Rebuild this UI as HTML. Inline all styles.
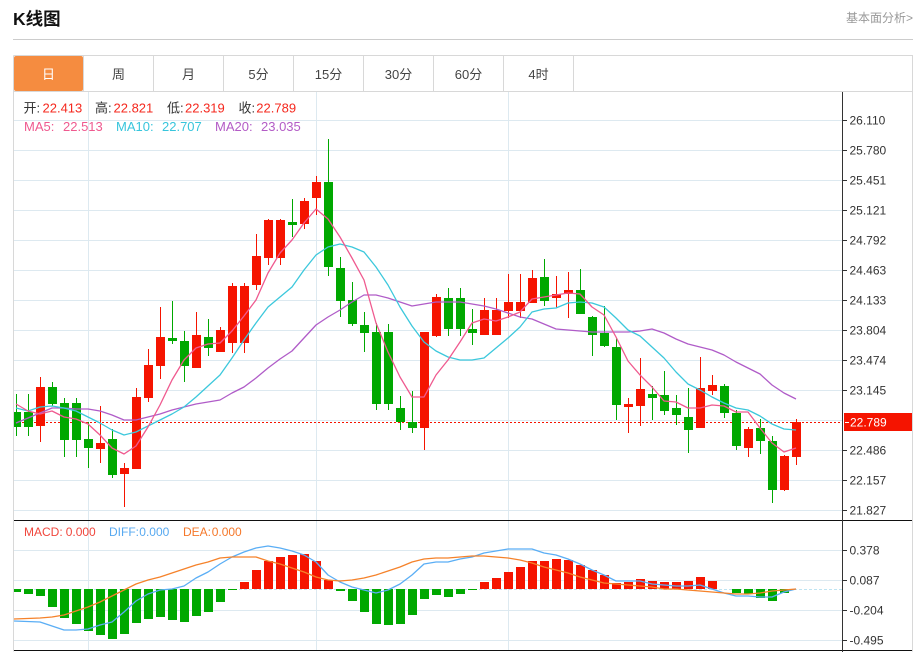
<!DOCTYPE html>
<html lang="zh"><head><meta charset="utf-8"><title>K线图</title>
<style>
html,body{margin:0;padding:0;background:#fff;width:921px;height:652px;overflow:hidden}
svg{display:block;font-family:"Liberation Sans","Noto Sans CJK SC",sans-serif}
.c{shape-rendering:crispEdges}
.l{fill:none;stroke-width:1.3;stroke-linejoin:round}
</style></head><body>
<svg width="921" height="652" viewBox="0 0 921 652" xmlns="http://www.w3.org/2000/svg">
<text x="13" y="25" font-size="17.5" font-weight="bold" fill="#111">K线图</text>
<text x="913" y="22" font-size="12" fill="#999" text-anchor="end">基本面分析&gt;</text>
<path class="c" d="M13 39.5H913" stroke="#ccc" fill="none"/>

<!-- tabs -->
<g class="c" fill="none" stroke="#d8d8d8">
<path d="M13.5 55.5H912.5V651.5M13.5 55.5V651.5M13 91.5H913"/>
<path d="M83.5 56V91M153.5 56V91M223.5 56V91M293.5 56V91M363.5 56V91M433.5 56V91M503.5 56V91M573.5 56V91"/>
</g>
<rect x="14" y="56" width="69" height="35" rx="2" fill="#f58c40"/>
<g font-size="13" fill="#444" text-anchor="middle">
<text x="48.500" y="79" fill="#fff">日</text>
<text x="118.500" y="79">周</text>
<text x="188.500" y="79">月</text>
<text x="258.500" y="79">5分</text>
<text x="328.500" y="79">15分</text>
<text x="398.500" y="79">30分</text>
<text x="468.500" y="79">60分</text>
<text x="538.500" y="79">4时</text>
</g>

<!-- grid -->
<g class="c" fill="none" stroke="#dde9f0">
<path d="M14 120.500H842M14 150.500H842M14 180.500H842M14 210.500H842M14 240.500H842M14 270.500H842M14 300.500H842M14 330.500H842M14 360.500H842M14 390.500H842M14 420.500H842M14 450.500H842M14 480.500H842M14 510.500H842"/>
<path d="M14 550.500H842M14 580.500H842M14 610.500H842M14 640.500H842"/>
<path d="M88.500 92V650M316.500 92V650M508.500 92V650"/>
</g>
<path class="c" d="M14 589.500H842" stroke="#bfe4f2" stroke-dasharray="3 2" fill="none"/>
<path class="c" d="M14 422.500H842" stroke="#f51400" stroke-dasharray="2 2" fill="none"/>

<!-- candles green -->
<path class="c" stroke="#00a800" fill="none" d="M16.500 394V436M28.500 394V436M52.500 382V406M64.500 398V457M76.500 398V457M88.500 422V468M112.500 429V478M172.500 301V344M184.500 331V382M208.500 319V356M292.500 199V237M328.500 139V276M340.500 257V317M352.500 282V326M364.500 312V352M376.500 323V410M388.500 324V410M400.500 396V430M412.500 391V433M448.500 288V336M460.500 288V336M472.500 309V345M544.500 259V306M580.500 269V314M592.500 316V356M604.500 306V347M616.500 338V420M652.500 386V420M664.500 371V415M676.500 395V425M688.500 388V453M724.500 384V418M736.500 410V450M760.500 419V454M772.500 436V503"/>
<path class="c" fill="#00a800" d="M14 412h7V427h-7zM24 412h9V427h-9zM48 387h9V404h-9zM60 403h9V440h-9zM72 403h9V440h-9zM84 439h9V448h-9zM108 439h9V475h-9zM168 338h9V341h-9zM180 341h9V366h-9zM204 337h9V348h-9zM288 222h9V225h-9zM324 182h9V267h-9zM336 268h9V301h-9zM348 300h9V324h-9zM360 325h9V333h-9zM372 332h9V404h-9zM384 332h9V404h-9zM396 408h9V422h-9zM408 422h9V428h-9zM444 298h9V329h-9zM456 298h9V329h-9zM468 329h9V333h-9zM540 277h9V301h-9zM576 290h9V314h-9zM588 317h9V335h-9zM600 333h9V346h-9zM612 347h9V405h-9zM648 394h9V398h-9zM660 395h9V411h-9zM672 408h9V415h-9zM684 417h9V430h-9zM720 386h9V413h-9zM732 413h9V446h-9zM756 428h9V441h-9zM768 441h9V490h-9z"/>
<!-- candles red -->
<path class="c" stroke="#f51400" fill="none" d="M40.500 377V442M100.500 406V463M124.500 463V507M136.500 388V469M148.500 349V402M160.500 307V379M196.500 312V368M220.500 327V352M232.500 283V353M244.500 283V353M256.500 234V290M268.500 219V265M280.500 219V265M304.500 198V229M316.500 176V215M424.500 332V450M436.500 294V337M484.500 298V335M496.500 298V335M508.500 274V318M520.500 274V318M532.500 270V303M556.500 276V308M568.500 272V318M628.500 398V433M640.500 358V426M700.500 357V428M712.500 375V395M748.500 427V457M784.500 455V491M796.500 419V465"/>
<path class="c" fill="#f51400" d="M36 387h9V426h-9zM96 443h9V449h-9zM120 468h9V474h-9zM132 397h9V469h-9zM144 365h9V398h-9zM156 337h9V366h-9zM192 335h9V368h-9zM216 330h9V352h-9zM228 286h9V343h-9zM240 286h9V343h-9zM252 256h9V285h-9zM264 220h9V258h-9zM276 220h9V258h-9zM300 201h9V224h-9zM312 182h9V198h-9zM420 332h9V428h-9zM432 297h9V336h-9zM480 310h9V335h-9zM492 310h9V335h-9zM504 302h9V311h-9zM516 302h9V311h-9zM528 278h9V303h-9zM552 294h9V298h-9zM564 290h9V294h-9zM624 404h9V407h-9zM636 389h9V406h-9zM696 388h9V428h-9zM708 385h9V391h-9zM744 429h9V448h-9zM780 456h9V490h-9zM792 422h9V457h-9z"/>

<!-- MA lines -->
<polyline class="l" stroke="#b05cc8" points="16,423 28,418 40,413 52,408 64,408 76,409 88,409 100,411 112,415 124,420 136,420 148,417 160,414 172,410 184,407 196,404 208,402 220,400 232,393 244,387 256,378 268,368 280,359 292,351 304,338 316,325 328,317 340,310 352,302 364,295 376,295 388,298 400,302 412,306 424,304 436,302 448,302 460,302 472,304 484,306 496,309 508,313 520,317 532,319 544,324 556,329 568,330 580,331 592,332 604,332 616,332 628,332 640,331 652,329 664,333 676,339 688,344 700,347 712,350 724,355 736,362 748,368 760,374 772,385 784,393 796,399"/>
<polyline class="l" stroke="#3cc8dc" points="16,408 28,411 40,407 52,406 64,408 76,411 88,417 100,423 112,430 124,435 136,432 148,426 160,420 172,414 184,407 196,397 208,386 220,375 232,358 244,340 256,323 268,307 280,297 292,287 304,270 316,255 328,247 340,244 352,247 364,252 376,267 388,285 400,307 412,326 424,342 436,351 448,357 460,360 472,360 484,358 496,348 508,338 520,327 532,312 544,309 556,308 568,303 580,302 592,303 604,307 616,318 628,330 640,336 652,347 664,358 676,372 688,384 700,390 712,397 724,403 736,408 748,410 760,416 772,424 784,429 796,430"/>
<polyline class="l" stroke="#ef5a8f" points="16,404 28,411 40,414 52,411 64,417 76,419 88,424 100,435 112,448 124,454 136,446 148,427 160,405 172,380 184,360 196,348 208,344 220,343 232,331 244,316 256,300 268,273 280,253 292,240 304,223 316,209 328,219 340,237 352,258 364,280 376,323 388,352 400,377 412,397 424,397 436,375 448,360 460,342 472,323 484,319 496,321 508,317 520,312 532,299 544,297 556,295 568,293 580,294 592,307 604,315 616,337 628,361 640,375 652,387 664,401 676,402 688,408 700,408 712,405 724,406 736,412 748,412 760,428 772,443 784,452 796,448"/>

<!-- MACD bars -->
<path class="c" fill="#00a800" d="M14 589h7V592h-7zM24 589h9V594h-9zM36 589h9V596h-9zM48 589h9V607h-9zM60 589h9V618h-9zM72 589h9V624h-9zM84 589h9V631h-9zM96 589h9V635h-9zM108 589h9V639h-9zM120 589h9V634h-9zM132 589h9V623h-9zM144 589h9V619h-9zM156 589h9V617h-9zM168 589h9V620h-9zM180 589h9V622h-9zM192 589h9V616h-9zM204 589h9V612h-9zM216 589h9V602h-9zM228 589h9V590h-9zM336 589h9V591h-9zM348 589h9V601h-9zM360 589h9V612h-9zM372 589h9V624h-9zM384 589h9V625h-9zM396 589h9V624h-9zM408 589h9V615h-9zM420 589h9V599h-9zM432 589h9V595h-9zM444 589h9V597h-9zM456 589h9V594h-9zM468 589h9V590h-9zM732 589h9V593h-9zM744 589h9V594h-9zM756 589h9V598h-9zM768 589h9V601h-9zM780 589h9V593h-9z"/>
<path class="c" fill="#f51400" d="M240 582h9V589h-9zM252 570h9V589h-9zM264 561h9V589h-9zM276 557h9V589h-9zM288 555h9V589h-9zM300 554h9V589h-9zM312 561h9V589h-9zM324 580h9V589h-9zM480 582h9V589h-9zM492 578h9V589h-9zM504 572h9V589h-9zM516 567h9V589h-9zM528 561h9V589h-9zM540 561h9V589h-9zM552 559h9V589h-9zM564 560h9V589h-9zM576 565h9V589h-9zM588 570h9V589h-9zM600 575h9V589h-9zM612 583h9V589h-9zM624 582h9V589h-9zM636 579h9V589h-9zM648 581h9V589h-9zM660 582h9V589h-9zM672 582h9V589h-9zM684 581h9V589h-9zM696 577h9V589h-9zM708 581h9V589h-9z"/>
<polyline class="l" stroke="#5aaef5" points="14,621 40,622 52,626 64,630 76,630 88,629 100,625 112,622 124,612 136,601 148,594 160,590 172,589 184,586 196,578 208,572 220,564 232,557 244,552 256,548 268,546 280,548 292,551 304,555 316,562 328,575 340,582 352,587 364,590 376,593 388,590 400,584 412,575 424,564 436,562 448,562 460,559 472,557 484,553 496,551 508,549 520,549 532,549 544,553 556,555 568,559 580,564 592,570 604,575 616,581 628,581 640,581 652,584 664,585 676,586 688,586 700,585 712,589 724,593 736,596 748,596 760,597 772,597 784,592 796,589"/>
<polyline class="l" stroke="#f5822a" points="14,619 40,618 52,617 64,615 76,611 88,607 100,602 112,596 124,590 136,584 148,580 160,577 172,573 184,569 196,565 208,562 220,558 232,557 244,557 256,557 268,561 280,564 292,568 304,572 316,577 328,580 340,581 352,580 364,578 376,575 388,571 400,567 412,562 424,559 436,558 448,558 460,557 472,556 484,556 496,557 508,558 520,560 532,563 544,567 556,570 568,573 580,577 592,580 604,583 616,584 628,585 640,586 652,587 664,589 676,589 688,590 700,591 712,592 724,593 736,594 748,594 760,593 772,591 784,590 796,589"/>

<!-- axes -->
<path class="c" fill="none" stroke="#111" d="M14 520.500H912M14 650.500H912"/>
<path class="c" fill="none" stroke="#333" d="M842.500 92V652M843 120.500h4M843 150.500h4M843 180.500h4M843 210.500h4M843 240.500h4M843 270.500h4M843 300.500h4M843 330.500h4M843 360.500h4M843 390.500h4M843 450.500h4M843 480.500h4M843 510.500h4M843 550.500h4M843 580.500h4M843 610.500h4M843 640.500h4"/>
<rect class="c" x="844" y="413" width="68" height="18" fill="#f51400"/>
<path class="c" d="M845 422.500h4" stroke="#fff" fill="none"/>
<g font-size="12" fill="#333">
<text x="849.500" y="124.500">26.110</text>
<text x="849.500" y="154.500">25.780</text>
<text x="849.500" y="184.500">25.451</text>
<text x="849.500" y="214.500">25.121</text>
<text x="849.500" y="244.500">24.792</text>
<text x="849.500" y="274.500">24.463</text>
<text x="849.500" y="304.500">24.133</text>
<text x="849.500" y="334.500">23.804</text>
<text x="849.500" y="364.500">23.474</text>
<text x="849.500" y="394.500">23.145</text>
<text x="850" y="426.500" fill="#fff">22.789</text>
<text x="849.500" y="454.500">22.486</text>
<text x="849.500" y="484.500">22.157</text>
<text x="849.500" y="514.500">21.827</text>
<text x="849.500" y="554.500">0.378</text>
<text x="849.500" y="584.500">0.087</text>
<text x="849.500" y="614.500">-0.204</text>
<text x="849.500" y="644.500">-0.495</text>
</g>

<!-- legends -->
<g font-size="13">
<text x="23.500" y="112.500" fill="#333">开:</text><text x="42.500" y="112.500" fill="#f5281e">22.413</text>
<text x="95" y="112.500" fill="#333">高:</text><text x="113.500" y="112.500" fill="#f5281e">22.821</text>
<text x="167" y="112.500" fill="#333">低:</text><text x="185" y="112.500" fill="#f5281e">22.319</text>
<text x="238.500" y="112.500" fill="#333">收:</text><text x="256.300" y="112.500" fill="#f5281e">22.789</text>
<g fill="#ef5a8f"><text x="24" y="131">MA5:</text><text x="63" y="131">22.513</text></g>
<g fill="#37c5dc"><text x="116" y="131">MA10:</text><text x="162" y="131">22.707</text></g>
<g fill="#b35cc6"><text x="215" y="131">MA20:</text><text x="261" y="131">23.035</text></g>
</g>
<g font-size="12">
<g fill="#f0463c"><text x="24" y="536">MACD:</text><text x="65.700" y="536">0.000</text></g>
<g fill="#57a9f0"><text x="109" y="536">DIFF:</text><text x="139.300" y="536">0.000</text></g>
<g fill="#f5782a"><text x="183" y="536">DEA:</text><text x="211.700" y="536">0.000</text></g>
</g>
</svg>
</body></html>
